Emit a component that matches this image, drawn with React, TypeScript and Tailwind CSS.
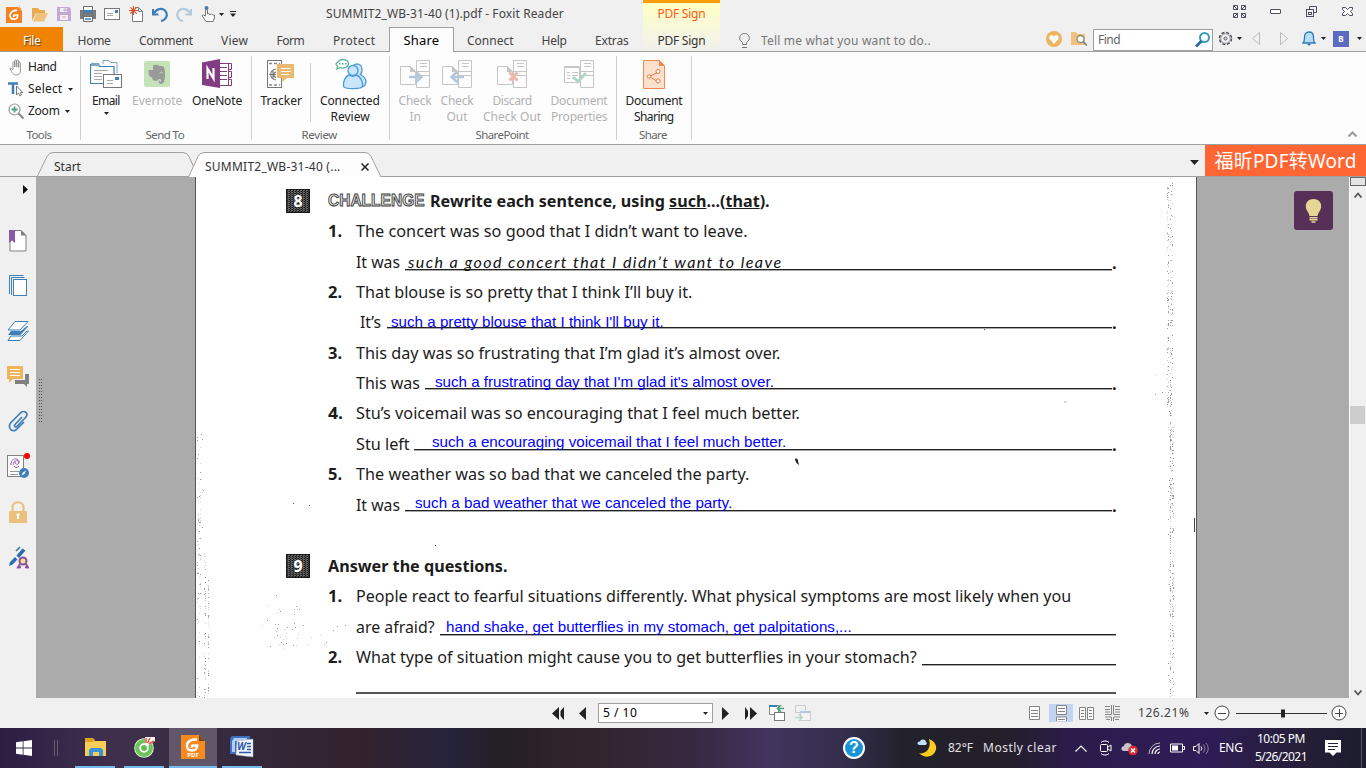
import { useLayoutEffect, useRef, useState } from "react";
import type { ReactNode } from "react";

/* Text run set to a given width, by tracking or by horizontal scaling. */
function Fit({ w, children, className = "", scale = false }: { w: number; children: ReactNode; className?: string; scale?: boolean }) {
  const ref = useRef<HTMLSpanElement>(null);
  const [v, setV] = useState<{ k: number; ls: number }>({ k: 1, ls: 0 });
  useLayoutEffect(() => {
    const el = ref.current;
    if (!el) return;
    const nat = el.offsetWidth;
    const n = (el.textContent || "").length;
    if (scale) setV({ k: w / nat, ls: 0 });
    else setV({ k: 1, ls: (w - nat) / Math.max(1, n) });
  }, []);
  return (
    <span className={"inline-block shrink-0 whitespace-nowrap text-left " + className} style={{ width: w }}>
      <span ref={ref} className="inline-block origin-left" style={{ transform: scale ? `scaleX(${v.k})` : undefined, letterSpacing: v.ls || undefined }}>
        {children}
      </span>
    </span>
  );
}

function Svg({ w, h, className = "", children }: { w: number; h: number; className?: string; children: ReactNode }) {
  return (
    <svg width={w} height={h} viewBox={`0 0 ${w} ${h}`} fill="none" className={"block shrink-0 " + className}>
      {children}
    </svg>
  );
}

function Tri({ className = "", fill = "#222" }: { className?: string; fill?: string }) {
  return (
    <Svg w={5} h={3} className={className}>
      <path d="M0 0h5L2.5 3z" fill={fill} />
    </Svg>
  );
}

function QuickBar() {
  return (
    <div className="flex h-[27px] items-center pt-px">
      <Svg w={16} h={17} className="ml-[6px]">
        <path d="M0 1h12l4 4v12H0z" fill="#f58220" />
        <path d="M13 0v4h3z" fill="#f7a35c" />
        <path d="M11.3 4.5C7 4.2 4 6.200 4 9.300c0 2.500 1.800 3.900 4 3.900 2.300 0 3.700-1.600 3.700-4.200H8.300l-.8 2" stroke="#fff" strokeWidth="1.700" />
      </Svg>
      <Svg w={16} h={15} className="ml-[10px]">
        <path d="M0 14V1h6l1.500 2H13v3H4z" fill="#e8a94f" />
        <path d="M1 14.500L4.500 6H16l-4 8.500z" fill="#f0c27c" />
      </Svg>
      <Svg w={14} h={14} className="ml-[9px]">
        <path d="M0 0h12l2 2v12H0z" fill="#c3a9d1" />
        <path d="M3 1h7v4H3zM3 8h8v5H3z" fill="#efefef" />
        <path d="M5 10h4M7 2h2v2H7z" stroke="#c3a9d1" />
      </Svg>
      <Svg w={16} h={16} className="ml-[9px]">
        <path d="M0 4h16v9h-3v-2H3v2H0z" fill="#7b7b7b" />
        <path d="M3.500.5h9V7h-9z" fill="#fff" stroke="#6c6c6c" />
        <path d="M4 4h8v3H4z" fill="#3f7fb8" />
        <path d="M3.500 10.500h9v5h-9z" fill="#fff" stroke="#6c6c6c" />
        <path d="M5 13h6" stroke="#3f7fb8" strokeWidth="1.500" />
      </Svg>
      <Svg w={16} h={12} className="ml-[8px]">
        <rect x=".5" y=".5" width="15" height="11" fill="#fff" stroke="#777" />
        <path d="M11 2h3v3h-3z" fill="#3f7fb8" />
        <path d="M3 5.500h6M3 7.500h6" stroke="#aaa" />
      </Svg>
      <Svg w={14} h={16} className="ml-[9px]">
        <path d="M3.500 5.500V15.500h10V5.500l-4-4H6" fill="#fff" stroke="#7b7b7b" />
        <path d="M9.500 1.500v4h4" stroke="#7b7b7b" />
        <path d="M4.500 0v9M0 4.500h9M1.300 1.300l6.400 6.400M7.700 1.300L1.300 7.700" stroke="#d9532c" strokeWidth="1.200" />
      </Svg>
      <Svg w={16} h={15} className="ml-[9px]">
        <path d="M1 2v5.500h5.500" stroke="#3f7fb8" strokeWidth="2" />
        <path d="M1.500 7C4 1.500 10 .5 13 3.500c3.500 4 1.500 9.500-4 10.500" stroke="#3f7fb8" strokeWidth="2.200" />
      </Svg>
      <Svg w={16} h={15} className="ml-[8px]">
        <path d="M15 2v5.500H9.500" stroke="#b4c9dc" strokeWidth="2" />
        <path d="M14.500 7C12 1.500 6 .5 3 3.500c-3.500 4-1.500 9.500 4 10.500" stroke="#b4c9dc" strokeWidth="2.200" />
      </Svg>
      <Svg w={15} h={16} className="ml-[9px]">
        <circle cx="5.500" cy="2" r="2" fill="#3f7fb8" />
        <path d="M4.500 10V3.500h2V8l1-.5 1.500 1 1.500-.5 1.500 1h1.500v3l-1.500 3.500H5L1 9.500l1.500-.5z" fill="#fff" stroke="#777" />
      </Svg>
      <Tri className="ml-[3px]" />
      <Svg w={6} h={6} className="ml-[6px]">
        <path d="M0 .5h6" stroke="#222" />
        <path d="M0 2.500h6L3 6z" fill="#222" />
      </Svg>
      <Fit w={238} className="ml-[90px] text-[12px] text-[#444]">SUMMIT2_WB-31-40 (1).pdf - Foxit Reader</Fit>
    </div>
  );
}

function MenuRow() {
  const cell = "flex items-center justify-center border-b border-[#a0a0a0] pt-[3px] ";
  return (
    <div className="flex h-[25px] text-[12px] text-[#444]">
      <div className={cell + "w-[63px] bg-[#f08300] text-white [text-shadow:1px_1px_1px_#5a4010]"}><Fit w={17}>File</Fit></div>
      <div className={cell + "w-[62px]"}><Fit w={33}>Home</Fit></div>
      <div className={cell + "w-[82px]"}><Fit w={54}>Comment</Fit></div>
      <div className={cell + "w-[55px]"}><Fit w={27}>View</Fit></div>
      <div className={cell + "w-[57px]"}><Fit w={28}>Form</Fit></div>
      <div className={cell + "w-[70px]"}><Fit w={42}>Protect</Fit></div>
      <div className="flex w-[65px] items-center justify-center border-x border-t border-[#a0a0a0] bg-[#fdfdfd] pt-[2px] text-[13px] text-black">
        <Fit w={36}>Share</Fit>
      </div>
      <div className={cell + "w-[73px]"}><Fit w={47}>Connect</Fit></div>
      <div className={cell + "w-[54px]"}><Fit w={25}>Help</Fit></div>
      <div className={cell + "w-[62px]"}><Fit w={34}>Extras</Fit></div>
    </div>
  );
}

function Header() {
  return (
    <div className="flex h-[52px] shrink-0">
      <div className="w-[643px] shrink-0">
        <QuickBar />
        <MenuRow />
      </div>
      <div className="flex w-[77px] shrink-0 flex-col items-center border-b border-t-[3px] border-b-[#a0a0a0] border-t-[#ff9c00] bg-linear-to-b from-[#ffffc4] to-[#f0f0ee] text-[12px]">
        <div className="flex h-[24px] items-center pb-[2px]"><Fit w={48} className="text-[#ff5a10]">PDF Sign</Fit></div>
        <div className="flex h-[24px] items-center pt-[3px]"><Fit w={48} className="text-[#333]">PDF Sign</Fit></div>
      </div>
      <div className="min-w-0 flex-1 border-b border-[#a0a0a0]">
        <div className="flex h-[23px] items-center justify-end">
          <Svg w={13} h={13}>
            <path d="M4.500.5h-4v4h4zM12.500.5h-4v4h4zM4.500 8.500h-4v4h4zM12.500 8.500h-4v4h4z" stroke="#4d4d63" />
            <path d="M1 1l4 4M12 1L8 5M1 12l4-4M12 12L8 8" stroke="#4d4d63" />
          </Svg>
          <Svg w={11} h={5} className="ml-[24px]"><rect x=".5" y=".5" width="10" height="4" rx=".5" fill="#fff" stroke="#4d4d63" /></Svg>
          <Svg w={11} h={11} className="ml-[25px]">
            <path d="M3.500 3V.5h7v6H8" stroke="#4d4d63" />
            <rect x=".5" y="3.500" width="7" height="7" stroke="#4d4d63" />
            <rect x="2.500" y="6.500" width="3" height="2" stroke="#4d4d63" />
          </Svg>
          <Svg w={11} h={9} className="ml-[25px] mr-[13px]">
            <path d="M.5.500h3l2 2 2-2h3v2l-2.200 2 2.200 2v2h-3l-2-2-2 2h-3v-2l2.200-2-2.200-2z" fill="#fff" stroke="#4d4d63" />
          </Svg>
        </div>
        <div className="flex h-[28px] items-center">
          <Svg w={11} h={15} className="ml-[19px] mt-[6px]">
            <path d="M3.500 11.500V9.500L1 7C0 3 2 .5 5.500.5S11 3 10 7L7.500 9.500v2zM3 14.500h5" stroke="#777" />
          </Svg>
          <Fit w={170} className="ml-[11px] mt-[7px] text-[12px] text-[#777]">Tell me what you want to do..</Fit>
          <Svg w={16} h={16} className="ml-[115px] mt-[3px]">
            <circle cx="8" cy="8" r="8" fill="#eeb45e" />
            <path d="M8 13L3.500 8C2 5 6 2.500 8 5.500 10 2.500 14 5 12.500 8z" fill="#fff" />
          </Svg>
          <Svg w={16} h={15} className="ml-[9px] mt-[3px]">
            <path d="M0 14V1h5l1.500 2H14v11z" fill="#f0c27c" />
            <circle cx="9.500" cy="8" r="3.500" fill="#fff" stroke="#888" strokeWidth="1.300" />
            <path d="M12 10.500l4 4" stroke="#888" strokeWidth="1.800" />
          </Svg>
          <div className="ml-[6px] mt-[5px] flex h-[22px] w-[120px] items-center justify-between border border-[#a0a0a0] bg-white pl-1 pr-[2px] text-[12px] text-[#666]">
            <Fit w={22}>Find</Fit>
            <Svg w={15} h={16}>
              <circle cx="9.500" cy="5.500" r="4.500" fill="#fff" stroke="#3a9bc4" strokeWidth="2" />
              <path d="M6.500 9L1 14.500" stroke="#2a6a9e" strokeWidth="2.800" />
            </Svg>
          </div>
          <Svg w={15} h={15} className="ml-[5px] mt-[3px]">
            <circle cx="7.500" cy="7.500" r="6" stroke="#4d4d63" strokeWidth="1.500" strokeDasharray="3 1.700" />
            <circle cx="7.500" cy="7.500" r="4.800" stroke="#777" strokeWidth=".8" />
            <circle cx="7.500" cy="7.500" r="1.500" stroke="#4d4d63" />
          </Svg>
          <Tri className="ml-[4px] mt-[3px]" />
          <Svg w={8} h={13} className="ml-[10px] mt-[3px]"><path d="M7.500.5v12L.5 6.500z" stroke="#bbb" /></Svg>
          <Svg w={8} h={13} className="ml-[20px] mt-[3px]"><path d="M.5.500v12l7-6z" stroke="#bbb" /></Svg>
          <Svg w={14} h={15} className="ml-[14px] mt-[3px]">
            <path d="M1 12c1.500-1 1.500-3 1.500-6C2.500 3 4 1 7 1s4.500 2 4.500 5c0 3 0 5 1.500 6z" fill="#b5dbf5" stroke="#2f78b5" strokeWidth="1.300" />
            <path d="M5 13h4l-2 2z" fill="#2f78b5" />
          </Svg>
          <Tri className="ml-[5px] mt-[3px]" />
          <div className="ml-[7px] mt-[3px] flex h-4 w-4 shrink-0 items-center justify-center bg-[#5c6bc0] text-[8px] font-bold text-white">B</div>
          <Tri className="ml-[8px] mt-[3px]" />
        </div>
      </div>
    </div>
  );
}

function Divider() {
  return <div className="my-1 w-px shrink-0 bg-[#d0d0d0]" />;
}

function Big({ icon, lines, widths, className, off = false, arrow = false }: { icon: ReactNode; lines: string[]; widths: number[]; className: string; off?: boolean; arrow?: boolean }) {
  return (
    <div className={"flex shrink-0 flex-col items-center text-[12px] leading-[16px] " + (off ? "text-[#b2b2b2] " : "text-[#222] ") + className}>
      <div className="flex h-[41px] items-start pt-[8px]">{icon}</div>
      {lines.map((l, i) => (
        <Fit key={l} w={widths[i]}>{l}</Fit>
      ))}
      {arrow && <Tri className="mt-[3px]" />}
    </div>
  );
}

function Group({ label, w, className, children }: { label: string; w: number; className: string; children: ReactNode }) {
  return (
    <div className={"flex shrink-0 flex-col " + className}>
      <div className="flex h-[74px]">{children}</div>
      <div className="flex h-[17px] items-center justify-center pr-[2px] text-[11.500px] text-[#666]"><Fit w={w}>{label}</Fit></div>
    </div>
  );
}

function SharePointIcon({ kind }: { kind: "in" | "out" | "discard" | "props" }) {
  const g = "#c6c6c6";
  return (
    <Svg w={31} h={29}>
      <path d="M16.500.5h13v27h-13z" fill="#fdfdfd" stroke={g} />
      <path d="M20 3.500h7M20 6.500h7M17 11.500h12M17 15.500h12" stroke={g} />
      {kind === "props" ? (
        <>
          <path d="M.5 6.500h15v16H.5z" fill="#fdfdfd" stroke={g} />
          <path d="M.5 7.500h15M3 12.500h3M8 12.500h6M3 15.500h3M8 15.500h6M3 18.500h3M8 18.500h4" stroke={g} strokeWidth="1.200" />
          <path d="M9 17l5 4.500L22 13" stroke="#b5d6c6" strokeWidth="2.800" />
        </>
      ) : (
        <>
          <path d="M.5 6.500h10l5 5v13H.5z" fill="#fdfdfd" stroke={g} />
          <path d="M10 6v6h6z" fill={g} />
        </>
      )}
      {kind === "in" && <path d="M9 17h11M16 12l5.500 5-5.500 5" stroke="#b3c8dd" strokeWidth="2.500" />}
      {kind === "out" && <path d="M22 17H11M15 12l-5.500 5 5.500 5" stroke="#b3c8dd" strokeWidth="2.500" />}
      {kind === "discard" && <path d="M12.500 12.500l8 8M20.500 12.500l-8 8" stroke="#f0b7a8" strokeWidth="3" />}
    </Svg>
  );
}

function Ribbon() {
  return (
    <div className="flex h-[93px] shrink-0 border-b border-[#a0a0a0] bg-[#fdfdfd]">
      <Group label="Tools" w={25} className="w-[80px]">
        <div className="flex w-full flex-col pt-[4px] text-[12px] text-[#222]">
          <div className="flex h-[22px] items-center pl-[9px]">
            <Svg w={15} h={17}>
              <path d="M4 10V3.500c0-1.200 1.800-1.200 1.800 0V8 2c0-1.300 1.900-1.300 1.900 0v6V2c0-1.300 1.900-1.300 1.900 0v6.500V4c0-1.200 1.800-1.200 1.800 0v8c0 2.500-1.500 4-4 4-3 0-4.200-2-6.500-6.500 1-1 2 0 3.100 1.500" fill="#fff" stroke="#8a8a8a" strokeWidth=".9" />
            </Svg>
            <Fit w={28} className="ml-[4px]">Hand</Fit>
          </div>
          <div className="flex h-[22px] items-center pl-[8px]">
            <Svg w={16} h={15}>
              <path d="M0 1.500h10M5 1v11" stroke="#3f7fb8" strokeWidth="2.500" />
              <path d="M8.500 4v9l2-2 1.500 3 1.500-1-1.200-2.500h2.500z" fill="#fff" stroke="#777" />
            </Svg>
            <Fit w={34} className="ml-[4px]">Select</Fit>
            <Tri className="ml-[6px]" />
          </div>
          <div className="flex h-[22px] items-center pl-[8px]">
            <Svg w={16} h={16}>
              <circle cx="6.500" cy="6.500" r="5.500" fill="#fff" stroke="#999" strokeWidth="1.200" />
              <path d="M3.500 6.500h6M6.500 3.500v6" stroke="#4fa080" strokeWidth="1.800" />
              <path d="M10.500 10.500l5 5" stroke="#888" strokeWidth="2" />
            </Svg>
            <Fit w={32} className="ml-[4px]">Zoom</Fit>
            <Tri className="ml-[5px]" />
          </div>
        </div>
      </Group>
      <Divider />
      <Group label="Send To" w={39} className="w-[170px]">
        <Big className="w-[50px]" lines={["Email"]} widths={[28]} arrow icon={
          <Svg w={32} h={29}>
            <path d="M13 4V.5h6l1.500 2H27V13" stroke="#7da8cc" />
            <path d="M.5 23.500V4.500H8l1.500 2H24v17z" fill="#fff" stroke="#3f7fb8" strokeWidth="1.200" />
            <path d="M1 3h8l1 3H1z" fill="#7da8cc" />
            <path d="M4 10.500h14M4 13.500h8M4 16.500h8M4 19.500h8" stroke="#aaa" />
            <rect x="13.500" y="14.500" width="18" height="13" fill="#fff" stroke="#777" />
            <path d="M25 17h4v3h-4z" fill="#3f7fb8" />
            <path d="M17 20.500h6M17 23.500h6" stroke="#aaa" />
          </Svg>} />
        <Big className="w-[52px]" off lines={["Evernote"]} widths={[50]} icon={
          <Svg w={26} h={27} className="mt-px">
            <rect width="26" height="26" rx="2" fill="#c5e2b8" />
            <path d="M9 4.500c2-1.300 5-.8 6.500.5 4-.3 5.500.3 5.500 8 0 6-1 10-4 10-2.500 0-3.500-3-1-3.800v2c1.500 0 1.500-3-.5-3.200-1.500 0-2 2-3 2-3 0-4-1-4.500-3.500C5.500 16.500 4.500 13 4.500 9h4.500z" fill="#9a9a9a" />
            <path d="M16 12.500c.3-2 2.500-2 3 0" stroke="#c5e2b8" />
          </Svg>} />
        <Big className="w-[68px]" lines={["OneNote"]} widths={[50]} icon={
          <Svg w={31} h={30} className="-mt-px">
            <rect x="15.500" y="4.500" width="11" height="22" fill="#fff" stroke="#813c84" />
            <path d="M18 8.500h7M18 12.500h7M18 16.500h7M18 20.500h7M26.500 4.500h3v6h-3M26.500 12.500h3v6h-3M26.500 20.500h3v6h-3" stroke="#813c84" />
            <path d="M0 3.500L18 0v29L0 26z" fill="#813c84" />
            <path d="M5.500 20V9.500l6 10V9" stroke="#fff" strokeWidth="2.200" />
          </Svg>} />
      </Group>
      <Divider />
      <Group label="Review" w={36} className="w-[137px]">
        <Big className="w-[58px]" lines={["Tracker"]} widths={[41]} icon={
          <Svg w={28} h={29}>
            <rect x=".5" y=".5" width="14" height="27" fill="#fff" stroke="#777" />
            <path d="M2 3.500h11M2 25h11" stroke="#888" strokeWidth="1.500" strokeDasharray="3 2" />
            <path d="M9 9c-7 1-7 10 0 11M9 12c-3 .5-3 5 0 5.500M2 14.500h7M6 10v9" stroke="#777" strokeWidth="1.100" />
            <path d="M10 4h17v14h-7l-4.500 4v-4H10z" fill="#eab96f" />
            <path d="M14 8.500h10M14 11.500h10M14 14.500h8" stroke="#fff" />
          </Svg>} />
        <div className="mt-[11px] h-[59px] w-px shrink-0 bg-[#d0d0d0]" />
        <Big className="w-[78px]" lines={["Connected", "Review"]} widths={[60, 39]} icon={
          <Svg w={33} h={32} className="-mt-[2px]">
            <path d="M4 4C7 0 14 1 14.500 5.500 15 9 9 11 6 9.500L3 11l.5-3C1 7 2 5 4 4z" fill="#fff" stroke="#57b594" strokeWidth="1.300" />
            <path d="M5 5.800h8" stroke="#57b594" strokeWidth="1.500" strokeDasharray="1.500 1.500" />
            <path d="M18 12c0-8 10-8 10 0 0 2-.5 3.500-1.500 4.500C31 19 33 23 31 27c-1 2-4 2-6 2" fill="#c9e6fa" stroke="#4a9ad4" strokeWidth="1.300" />
            <circle cx="19" cy="12.500" r="5" fill="#c9e6fa" stroke="#4a9ad4" strokeWidth="1.300" />
            <path d="M15.500 17C11 18 9 24 9.500 28c.2 3.500 19 3.500 19 0 .5-4-2-10-6.500-11-2 1.500-4.500 1.500-6.500 0z" fill="#c9e6fa" stroke="#4a9ad4" strokeWidth="1.300" />
          </Svg>} />
      </Group>
      <Divider />
      <Group label="SharePoint" w={53} className="w-[226px]">
        <Big className="ml-[4px] w-[42px]" off lines={["Check", "In"]} widths={[33, 11]} icon={<SharePointIcon kind="in" />} />
        <Big className="w-[42px]" off lines={["Check", "Out"]} widths={[33, 21]} icon={<SharePointIcon kind="out" />} />
        <Big className="w-[68px]" off lines={["Discard", "Check Out"]} widths={[39, 58]} icon={<SharePointIcon kind="discard" />} />
        <Big className="w-[66px]" off lines={["Document", "Properties"]} widths={[57, 56]} icon={<SharePointIcon kind="props" />} />
      </Group>
      <Divider />
      <Group label="Share" w={28} className="w-[74px]">
        <Big className="w-[74px]" lines={["Document", "Sharing"]} widths={[57, 40]} icon={
          <Svg w={22} h={29}>
            <path d="M.5.500h16l5 5v23H.5z" fill="#fbe0cd" stroke="#ee8a50" />
            <path d="M16 0v6h6z" fill="#ee8a50" />
            <path d="M6.500 16.500l8-4M6.500 16.500l8 5" stroke="#ee7a3a" />
            <circle cx="6" cy="16.500" r="1.700" fill="#fff" stroke="#ee7a3a" />
            <circle cx="15" cy="11.500" r="2" fill="#fff" stroke="#ee7a3a" />
            <circle cx="15" cy="21" r="2" fill="#fff" stroke="#ee7a3a" />
          </Svg>} />
      </Group>
      <Divider />
      <Svg w={9} h={6} className="ml-auto mr-[9px] mt-[79px]"><path d="M.5 5.500l4-4 4 4" stroke="#999" strokeWidth="2" /></Svg>
    </div>
  );
}

function TabStrip() {
  return (
    <div className="flex h-[32px] shrink-0 items-end border-b border-[#a0a0a0] text-[12px] text-[#333]">
      <div className="relative ml-[37px] flex h-[24px] w-[151px] items-center">
        <Svg w={160} h={24} className="absolute left-0 top-0">
          <path d="M.5 24L10 4.500Q12 .5 16 .5H146Q150 .5 152 4.500L158 18" fill="#f0f0f0" stroke="#a0a0a0" />
        </Svg>
        <Fit w={27} className="relative ml-[17px] mt-[5px]">Start</Fit>
      </div>
      <div className="relative -mb-px flex h-[25px] w-[194px] items-center">
        <Svg w={194} h={25} className="absolute left-0 top-0">
          <path d="M.5 25L10 4.500Q12 .5 16 .5H177Q181 .5 183 4.500L193 25" fill="#fdfdfd" stroke="#a0a0a0" />
        </Svg>
        <Fit w={136} className="relative ml-[17px] mt-[5px]">SUMMIT2_WB-31-40 (...</Fit>
        <Svg w={8} h={8} className="relative ml-[20px] mt-[5px]"><path d="M.5.500l7 7M7.500.5l-7 7" stroke="#222" strokeWidth="1.500" /></Svg>
      </div>
      <Svg w={9} h={5} className="ml-auto mb-[11px]"><path d="M0 0h9L4.500 5z" fill="#222" /></Svg>
      <div className="ml-[6px] flex h-[31px] w-[161px] items-center justify-center bg-[#ff6633] pt-[2px] font-['Noto_Sans','Noto_Sans_CJK_SC',sans-serif] text-[19px] text-white">
        <Fit w={142}>福昕PDF转Word</Fit>
      </div>
    </div>
  );
}

function Sidebar() {
  const c = "flex h-[45.3px] w-full items-center justify-center";
  return (
    <div className="flex w-[36px] shrink-0 flex-col">
      <div className="flex h-[41px] pl-[23px] pt-[8px]"><Svg w={5} h={9}><path d="M0 0v9l5-4.500z" fill="#111" /></Svg></div>
      <div className={c}>
        <Svg w={18} h={22}>
          <path d="M1 .5h11l5 5v15.500H1z" fill="#fff" stroke="#808080" />
          <path d="M12 0v5.500h5.500z" fill="#808080" />
          <path d="M0 0h6v13l-3-2.500L0 13z" fill="#8a5ba5" />
        </Svg>
      </div>
      <div className={c}>
        <Svg w={18} h={22}>
          <path d="M.5 19V.5h14M2.500 20V2.500h13" stroke="#3f7fb8" />
          <rect x="4.500" y="4.500" width="13" height="16" fill="#fff" stroke="#3f7fb8" />
        </Svg>
      </div>
      <div className={c}>
        <Svg w={22} h={20}>
          <path d="M8 .5h13L13 9H1z" fill="#fff" stroke="#3f7fb8" />
          <path d="M4 10h10l6-5h1.500L13.500 14H1z" fill="#3f7fb8" />
          <path d="M4 15h11l5-5h1.500L13 19.500H1z" fill="#fff" stroke="#3f7fb8" />
        </Svg>
      </div>
      <div className={c}>
        <Svg w={22} h={22}>
          <path d="M18 8h4v10h-2v3l-3-3H8v-4h10z" fill="#808080" />
          <path d="M0 0h16v13H6l-4 4v-4H0z" fill="#f0b45e" />
          <path d="M3 3.500h10M3 6.500h10M3 9.500h10" stroke="#fff" />
        </Svg>
      </div>
      <div className={c}>
        <Svg w={20} h={21}>
          <path d="M14 6L7 13.500c-1.500 1.700.5 3.300 2 1.800l8-8.300c5-5-1-8.500-4.500-5L3 11.500C-1 16 4 22.500 8.500 18.500L16 11" stroke="#3f7fb8" strokeWidth="1.700" />
        </Svg>
      </div>
      <div className={c}>
        <Svg w={24} h={25} className="-mt-[3px]">
          <rect x="1.500" y="2.500" width="16" height="21" fill="#fff" stroke="#808080" />
          <path d="M5 12c-1-7 8-8 8-3 0 3-4 3-4 0 0-2 4-2 4 1M7 12c0-3 2-4 2-4M13 13c-2 2-4 2-5 0" stroke="#9160a8" />
          <path d="M4 18.500h9M4 21.500h8" stroke="#999" />
          <circle cx="18" cy="20" r="5" fill="#3f7fb8" />
          <path d="M15.500 22.500l1.500-3 3-2-1.500 3.500z" fill="#fff" />
          <circle cx="21" cy="3" r="3" fill="#f00" />
        </Svg>
      </div>
      <div className={c}>
        <Svg w={18} h={22}>
          <path d="M3.500 11V6.500C3.500-.5 14.500-.5 14.500 6.500V11" stroke="#ebc07c" strokeWidth="2.200" />
          <rect y="10" width="18" height="12" rx="1" fill="#ebc07c" />
          <path d="M9 13v5M7.500 13.500h3" stroke="#fff" strokeWidth="2" />
        </Svg>
      </div>
      <div className={c}>
        <Svg w={21} h={23}>
          <path d="M1 20l1-4 5-5 2.500 2.500-5 5zM8.500 9.500l6-7 3 2-6.500 7.500z" fill="#2a6db0" />
          <path d="M8 5l4-4" stroke="#2a6db0" strokeWidth="1.500" />
          <circle cx="15" cy="15" r="3.500" fill="#ffe08a" stroke="#8a4fa3" strokeWidth="2" />
          <path d="M12 18l-2 3.500 3-.2M18 18l2 3.500-3-.2" stroke="#8a4fa3" strokeWidth="2" />
        </Svg>
      </div>
    </div>
  );
}

/* Scanner specks scattered over the page, page-local coordinates. */
function Specks() {
  let s = 17;
  const rnd = () => {
    s = (s * 16807) % 2147483647;
    return s / 2147483647;
  };
  const dots: { x: number; y: number; c: string }[] = [];
  const add = (n: number, x: number, y: number, w: number, h: number) => {
    for (let i = 0; i < n; i++) dots.push({ x: Math.floor(x + rnd() * w), y: Math.floor(y + rnd() * h), c: rnd() > 0.6 ? "#9a9a9a" : "#cfcfcf" });
  };
  add(24, 1, 256, 7, 110);
  add(44, 1, 340, 3, 180);
  add(26, 4, 285, 1, 160);
  add(50, 8, 375, 2, 146);
  add(45, 12, 400, 1, 120);
  add(100, 971, 0, 2, 230);
  add(150, 974, 0, 3, 330);
  add(30, 972, 200, 2, 320);
  add(130, 974, 200, 1, 320);
  add(130, 976, 250, 2, 270);
  add(26, 78, 430, 26, 42);
  add(14, 61, 410, 48, 60);
  add(8, 110, 448, 40, 20);
  add(4, 955, 180, 15, 50);
  return (
    <Svg w={1000} h={521} className="absolute left-0 top-0">
      {dots.map((d, i) => (
        <rect key={i} x={d.x} y={d.y} width="1" height="1" fill={d.c} />
      ))}
      <path d="M599 282c2-1 3 0 3 2l1 4c-2-1-4-4-4-6z" fill="#222" />
      <path d="M239 368h1v1h-1zM113 328h1v1h-1zM97 326h1v1h-1zM788 151h1v2h-1z" fill="#555" />
      <path d="M868 225h3" stroke="#bbb" />
      <path d="M998.500 341v14" stroke="#444" />
    </Svg>
  );
}

function Item({ n, nw, text, w, className }: { n: string; nw: number; text: string; w: number; className: string }) {
  return (
    <div className={"flex items-center " + className}>
      <div className="w-[28px] shrink-0 font-bold"><Fit w={nw} scale>{n}</Fit></div>
      <Fit w={w} scale>{text}</Fit>
    </div>
  );
}

function Blank({ label, w, answer, aw, className, lead, ruleClass, labelClass = "", up = "", dot = true, hand = false }: { label: string; w: number; answer: string; aw: number; className: string; lead: string; ruleClass: string; labelClass?: string; up?: string; dot?: boolean; hand?: boolean }) {
  return (
    <div className={"flex pl-[28px] " + className}>
      <div className={"flex h-full items-center " + labelClass}><Fit w={w} scale>{label}</Fit></div>
      <div className={"flex items-start border-b border-[#222] shadow-[0_1px_0_#a8a8a8] " + lead + " " + ruleClass}>
        {hand ? (
          <Fit w={aw} className="mt-[3px] font-['Lato'] text-[16px] italic leading-[24px] text-[#111]">{answer}</Fit>
        ) : (
          <Fit w={aw} scale className={"font-['Liberation_Sans'] text-[15px] leading-[30px] text-[#0000ff] " + up}>{answer}</Fit>
        )}
      </div>
      {dot && <span className="w-[3px] font-bold leading-[31px]">.</span>}
    </div>
  );
}

function NumberBox({ n }: { n: string }) {
  return (
    <div className="mr-[18px] flex h-[24px] w-[24px] shrink-0 items-center justify-center border border-[#1a1a1a] bg-[conic-gradient(#6a6a6a_25%,#161616_0_50%,#444_0_75%,#222_0)] bg-[size:3px_2px] text-[16px] font-bold text-white">
      {n}
    </div>
  );
}

function Page() {
  return (
    <div className="relative w-[1002px] shrink-0 overflow-hidden border-x border-[#555] bg-white pt-[9px] font-['Noto_Sans',sans-serif] text-[16.500px] text-[#1c1c1c]">
      <Specks />
      <div className="relative">
        <div className="flex h-[30px] items-center pl-[90px] font-bold">
          <NumberBox n="8" />
          <Fit w={97} scale className="font-['Liberation_Sans'] text-[16px] text-[#e8e8e8] [-webkit-text-stroke:0.900px_#3a3a3a]">CHALLENGE</Fit>
          <Fit w={340} scale className="ml-[5px]">Rewrite each sentence, using <u>such</u>...(<u>that</u>).</Fit>
        </div>
        <div className="pl-[132px]">
          <Item className="h-[31px]" n="1." nw={14} w={392} text="The concert was so good that I didn’t want to leave." />
          <Blank className="h-[30px]" w={44} label="It was" lead="ml-[5px]" ruleClass="h-[23px] w-[707px] pl-[3px]" hand aw={375} answer="such a good concert that I didn’t want to leave" />
          <Item className="h-[30px]" n="2." nw={14} w={336} text="That blouse is so pretty that I think I’ll buy it." />
          <Blank className="h-[31px]" w={21} label="It’s" labelClass="pl-[4px]" lead="ml-[6px]" ruleClass="h-[21px] w-[725px] pl-[4px]" aw={273} answer="such a pretty blouse that I think I'll buy it." />
          <Item className="h-[30px]" n="3." nw={14} w={424} text="This day was so frustrating that I’m glad it’s almost over." />
          <Blank className="h-[30px]" w={64} label="This was" lead="ml-[5px]" ruleClass="h-[21px] w-[687px] pl-[10px]" up="-mt-px" aw={339} answer="such a frustrating day that I'm glad it's almost over." />
          <Item className="h-[31px]" n="4." nw={15} w={444} text="Stu’s voicemail was so encouraging that I feel much better." />
          <Blank className="h-[30px]" w={54} label="Stu left" lead="ml-[4px]" ruleClass="h-[21px] w-[698px] pl-[18px]" up="-mt-[2px]" aw={354} answer="such a encouraging voicemail that I feel much better." />
          <Item className="h-[31px]" n="5." nw={14} w={393} text="The weather was so bad that we canceled the party." />
          <Blank className="h-[30px]" w={44} label="It was" lead="ml-[5px]" ruleClass="h-[21px] w-[707px] pl-[10px]" up="-mt-[2px]" aw={317} answer="such a bad weather that we canceled the party." />
        </div>
        <div className="mt-[31px] flex h-[30px] items-center pl-[90px] font-bold">
          <NumberBox n="9" />
          <Fit w={179} scale>Answer the questions.</Fit>
        </div>
        <div className="pl-[132px]">
          <Item className="h-[31px]" n="1." nw={14} w={715} text="People react to fearful situations differently. What physical symptoms are most likely when you" />
          <Blank className="h-[30px]" w={79} label="are afraid?" lead="ml-[5px]" ruleClass="h-[23px] w-[676px] pl-[6px]" dot={false} aw={406} answer="hand shake, get butterflies in my stomach, get palpitations,..." />
          <div className="flex h-[30px] items-start">
            <Item className="h-[30px]" n="2." nw={14} w={561} text="What type of situation might cause you to get butterflies in your stomach?" />
            <div className="ml-[5px] h-[23px] w-[194px] border-b border-[#222] shadow-[0_1px_0_#a8a8a8]" />
          </div>
          <div className="ml-[28px] h-[22px] w-[760px] border-b-2 border-[#555]" />
        </div>
      </div>
    </div>
  );
}

function Viewer() {
  return (
    <div className="flex h-[521px] shrink-0 overflow-hidden">
      <Sidebar />
      <div className="w-[159px] shrink-0 bg-[#ababab] pl-[3px] pt-[202px]">
        <Svg w={4} h={44}>
          <path d="M.5 0v44M2.500 0v44" stroke="#555" strokeDasharray="1 2" />
        </Svg>
      </div>
      <Page />
      <div className="flex w-[152px] shrink-0 items-start bg-[#ababab] pl-[97px] pt-[14px]">
        <div className="flex h-[39px] w-[39px] items-center justify-center rounded-[3px] bg-[#563056]">
          <Svg w={17} h={24}>
            <path d="M8.500 0C14 0 17 4 16 9c-.8 3.500-3 4.500-3.500 8h-8C4 13.500 1.800 12.500 1 9 0 4 3 0 8.500 0z" fill="#e5d695" />
            <path d="M4.500 18.700h8M4.500 20.700h8M6.500 23h4" stroke="#e5d695" strokeWidth="1.400" />
          </Svg>
        </div>
      </div>
      <div className="flex flex-1 flex-col items-center border-l border-white bg-[#f0f0f0]">
        <div className="h-[9px] w-full border border-[#666] bg-[#e4e4e4]" />
        <Svg w={8} h={6} className="mt-[6px]"><path d="M.5 5.500L4 1.500l3.500 4" stroke="#555" strokeWidth="1.800" /></Svg>
        <div className="mr-px mt-[208px] h-[18px] w-[15px] bg-[#cdcdcd]" />
        <Svg w={8} h={6} className="mb-[2px] mt-auto"><path d="M.5.500L4 4.500 7.500.5" stroke="#555" strokeWidth="1.800" /></Svg>
      </div>
    </div>
  );
}

function StatusBar() {
  const g = "#858585";
  return (
    <div className="flex h-[30px] shrink-0 items-center text-[12px] text-[#333]">
      <Svg w={12} h={13} className="ml-[552px]"><path d="M7 0v13L0 6.500zM12 0v13l-3.500-4v-5z" fill="#222" /></Svg>
      <Svg w={7} h={13} className="ml-[15px]"><path d="M7 0v13L0 6.500z" fill="#222" /></Svg>
      <div className="ml-[12px] flex h-[20px] w-[115px] items-center justify-between border border-[#a0a0a0] bg-white pl-[4px] pr-[4px] text-black">
        <Fit w={34}>5 / 10</Fit>
        <Tri />
      </div>
      <Svg w={7} h={13} className="ml-[9px]"><path d="M0 0v13l7-6.500z" fill="#222" /></Svg>
      <Svg w={12} h={13} className="ml-[16px]"><path d="M5 0v13l7-6.500zM0 0v13l3-4v-5z" fill="#222" /></Svg>
      <Svg w={17} h={16} className="ml-[12px]">
        <path d="M.5.500h9v9h-9z" fill="#fff" stroke="#888" />
        <path d="M0 1h8" stroke="#3f7fb8" strokeWidth="2" />
        <path d="M15 3.500H9M12 0L8.500 3.500 12 7" stroke="#4fa080" strokeWidth="1.700" />
        <rect x="5.500" y="7.500" width="10" height="8" fill="#fff" stroke="#777" />
      </Svg>
      <Svg w={17} h={16} className="ml-[9px]">
        <path d="M.5.500h10v7h-10z" stroke="#ccc" />
        <rect x="5.500" y="6.500" width="10" height="9" fill="#f4f4f4" stroke="#ccc" />
        <path d="M6 7h9" stroke="#b3c8dd" strokeWidth="2" />
        <path d="M0 12.500h6M4 9l3 3.500L4 16" stroke="#b5d6c6" strokeWidth="1.600" />
      </Svg>
      <Svg w={11} h={14} className="ml-[217px]">
        <path d="M.5.500h10v13H.5z" fill="#fff" stroke={g} />
        <path d="M2 4.500h7M2 7.500h7M2 10.500h7" stroke={g} />
      </Svg>
      <div className="ml-[9px] flex h-[18px] w-[24px] items-center justify-center bg-[#c1d5f2]">
        <Svg w={11} h={16}>
          <path d="M.5.500h10v9H.5zM.5 16v-4h10v4" fill="#fff" stroke={g} />
          <path d="M2 3.500h7M2 6.500h7M2 14.500h7" stroke={g} />
        </Svg>
      </div>
      <Svg w={15} h={13} className="ml-[6px]">
        <path d="M.5.500h6v12h-6zM8.500.5h6v12h-6z" fill="#fff" stroke={g} />
        <path d="M2 3.500h3M2 6.500h3M2 9.500h3M10 3.500h3M10 6.500h3M10 9.500h3" stroke={g} />
      </Svg>
      <Svg w={15} h={16} className="ml-[11px]">
        <path d="M6.500 0v9.500H0M8.500 0v9.500H15M6.500 16v-4H0M8.500 16v-4H15M0 1.500h5M0 4.500h5M0 7h5M10 1.500h5M10 4.500h5M10 7h5M1 14.500h4M10 14.500h4" stroke={g} />
      </Svg>
      <Fit w={52} className="ml-[18px] text-[#444]">126.21%</Fit>
      <Tri className="ml-[14px]" />
      <Svg w={16} h={16} className="ml-[5px]"><circle cx="8" cy="8" r="7" fill="#fff" stroke="#444" /><path d="M4 8.500h8" stroke="#444" /></Svg>
      <Svg w={91} h={9} className="ml-[6px]"><path d="M0 4.500h91" stroke="#333" /><path d="M45 .5h4v8h-4z" fill="#222" /></Svg>
      <Svg w={16} h={16} className="ml-[4px]"><circle cx="8" cy="8" r="7" fill="#fff" stroke="#444" /><path d="M4 8.500h8M8.500 4v8" stroke="#444" /></Svg>
    </div>
  );
}

function TaskApp({ className, children }: { className: string; children: ReactNode }) {
  return <div className={"flex h-full shrink-0 items-center justify-center border-b-2 border-[#76b9ed] " + className}>{children}</div>;
}

function Taskbar() {
  return (
    <div className="flex h-[40px] shrink-0 items-center bg-[linear-gradient(90deg,#2b1e42_0,#40304e_110px,#33283a_250px,#33222d_360px,#25233a_450px,#251f26_500px,#31242a_580px,#372840_690px,#42345e_770px,#332d4a_850px,#23222c_900px,#231f28_1000px,#2b1c4a_1070px,#2f1c58_1200px,#251f38_1300px,#1c1c2e_1366px)] font-['Noto_Sans',sans-serif] text-[12px] text-white">
      <Svg w={16} h={16} className="ml-[16px]"><path d="M0 2.300L6.700 1.300V7.600H0zM7.500 1.200L16 0v7.600H7.500zM0 8.400h6.700v6.300L0 13.700zM7.500 8.400H16V16l-8.500-1.200z" fill="#fff" /></Svg>
      <Svg w={4} h={16} className="ml-[22px] mr-[17px]"><path d="M.5 0v16M3.500 0v16" stroke="#655a6c" /></Svg>
      <TaskApp className="w-[40px]">
        <Svg w={21} h={18}>
          <path d="M0 1h8l2 2h11v15H0z" fill="#f7cd57" />
          <path d="M0 0h8l2 2-2 2H0z" fill="#e0a21a" />
          <path d="M4 18v-6l2-2h10l2 2v6h-4v-4H8v4z" fill="#3593dc" />
        </Svg>
      </TaskApp>
      <TaskApp className="ml-[9px] w-[40px]">
        <Svg w={21} h={21}>
          <circle cx="10" cy="11" r="9.800" fill="#eef7ea" />
          <circle cx="10" cy="11" r="6" stroke="#6cc45c" strokeWidth="6" />
          <circle cx="10" cy="11" r="3.800" fill="#5bbb4d" stroke="#fff" strokeWidth="1.800" />
          <path d="M11 0h10v4l-7 5-3-1z" fill="#f4f4f4" />
          <path d="M12 1v5M16 1l-2.500 5M20 4l-5 3" stroke="#e8553c" strokeWidth="1.500" />
        </Svg>
      </TaskApp>
      <TaskApp className="ml-[5px] w-[48px] bg-[#61566a]">
        <div className="relative flex h-6 w-6 items-end justify-center">
          <Svg w={24} h={24} className="absolute left-0 top-0">
            <path d="M0 0h18l6 6v18H0z" fill="#f6891f" />
            <path d="M18 0v6h6z" fill="#6b4c2e" />
            <path d="M16 4.500C10 4 6 6.500 6 11c0 3 2 4.500 5 4.500s5-2 5.200-5H11.500l-1 2.500" stroke="#fff" strokeWidth="2.400" />
          </Svg>
          <span className="relative text-[6px] font-bold leading-[7px]">PDF</span>
        </div>
      </TaskApp>
      <TaskApp className="ml-[5px] w-[40px]">
        <div className="relative h-6 w-6">
          <Svg w={24} h={24} className="absolute left-0 top-0">
            <path d="M3 1h17v18H0V6q0-5 3-5z" fill="#3f6fc0" />
            <path d="M4 3h13v3H5v11H2V6z" fill="#b5cdf0" />
            <path d="M7 6l16-2v18L6 20z" fill="#f4f6fc" stroke="#9ab" strokeWidth=".5" />
            <path d="M17 8.500h4M17 11.500h4M17 14.500h4M9 17.500h12" stroke="#2f58a8" strokeWidth="1.300" />
          </Svg>
          <span className="absolute left-[7px] top-[5px] text-[10px] font-bold italic leading-[12px] text-[#2f58a8]">W</span>
        </div>
      </TaskApp>
      <div className="ml-[581px] flex h-[22px] w-[22px] shrink-0 items-center justify-center rounded-full border-2 border-white bg-[#1793d6] font-['Liberation_Sans'] text-[16px] font-bold">?</div>
      <Svg w={20} h={19} className="ml-[52px]">
        <path d="M12 0c6 2 9 8 6 13s-10 7-16 1c6 2 13-4 10-14z" fill="#fccb22" />
        <path d="M2 6C-1 5 1 2 3 2.500 4-.5 9 0 9 3c2 1 0 3.500-1.500 3z" fill="#bfe0f5" />
      </Svg>
      <Fit w={25} className="ml-[11px] text-[#e2e0e6]">82°F</Fit>
      <Fit w={74} className="ml-[10px] text-[#e2e0e6]">Mostly clear</Fit>
      <Svg w={12} h={7} className="ml-[18px]"><path d="M.5 6.500L6 1l5.500 5.500" stroke="#fff" strokeWidth="1.200" /></Svg>
      <Svg w={12} h={16} className="ml-[13px]">
        <rect x=".5" y="4.500" width="7" height="7" rx="1" stroke="#fff" />
        <path d="M8 7l3-2v6L8 9M1 2.500C3 .5 7 .5 9 2.500M1 13.500c2 2 6 2 8 0" stroke="#fff" />
      </Svg>
      <Svg w={17} h={15} className="ml-[9px]">
        <path d="M3 10C-1 10 0 5 3 5c0-4 7-4 8 0 4 0 4 5 0 5z" fill="#c5c3ca" />
        <circle cx="12" cy="9.500" r="4.800" fill="#da2c34" />
        <path d="M10 7.500l4 4M14 7.500l-4 4" stroke="#fff" strokeWidth="1.500" />
      </Svg>
      <Svg w={13} h={13} className="ml-[10px]">
        <path d="M1 12A11 11 0 0 1 12 1" stroke="#bbb" />
        <path d="M4 12a8 8 0 0 1 8-8M7 12a5 5 0 0 1 5-5M10 12a2 2 0 0 1 2-2" stroke="#fff" strokeWidth="1.200" />
      </Svg>
      <Svg w={15} h={10} className="ml-[9px]"><path d="M.5 1h12v8H.5zM13 3.500h1.500v3H13" stroke="#fff" /><path d="M2 2.500h6v5H2z" fill="#fff" /></Svg>
      <Svg w={17} h={13} className="ml-[8px]">
        <path d="M.5 4.500h2.500l3-3v10l-3-3H.5z" stroke="#fff" />
        <path d="M8 4.500q1.500 2 0 4" stroke="#fff" />
        <path d="M10.500 2.500q3 4 0 8M13 1q4.500 5.500 0 11" stroke="#8c80a0" />
      </Svg>
      <Fit w={24} className="ml-[9px]">ENG</Fit>
      <div className="ml-[12px] flex w-[52px] shrink-0 flex-col items-center leading-[18px]">
        <Fit w={48}>10:05 PM</Fit>
        <Fit w={52}>5/26/2021</Fit>
      </div>
      <Svg w={16} h={16} className="ml-[18px]">
        <path d="M0 0h16v12.500h-4.500L8 16l-3.500-3.500H0z" fill="#fff" />
        <path d="M3 3.500h10M3 6.500h10M3 9.500h7" stroke="#2a2140" />
      </Svg>
      <div className="ml-[20px] h-full w-px bg-[#55506a]" />
    </div>
  );
}

export default function App() {
  return (
    <div className="flex h-[768px] w-[1366px] flex-col overflow-hidden bg-[#f0f0f0] font-['Noto_Sans',sans-serif]">
      <Header />
      <Ribbon />
      <TabStrip />
      <Viewer />
      <StatusBar />
      <Taskbar />
    </div>
  );
}
